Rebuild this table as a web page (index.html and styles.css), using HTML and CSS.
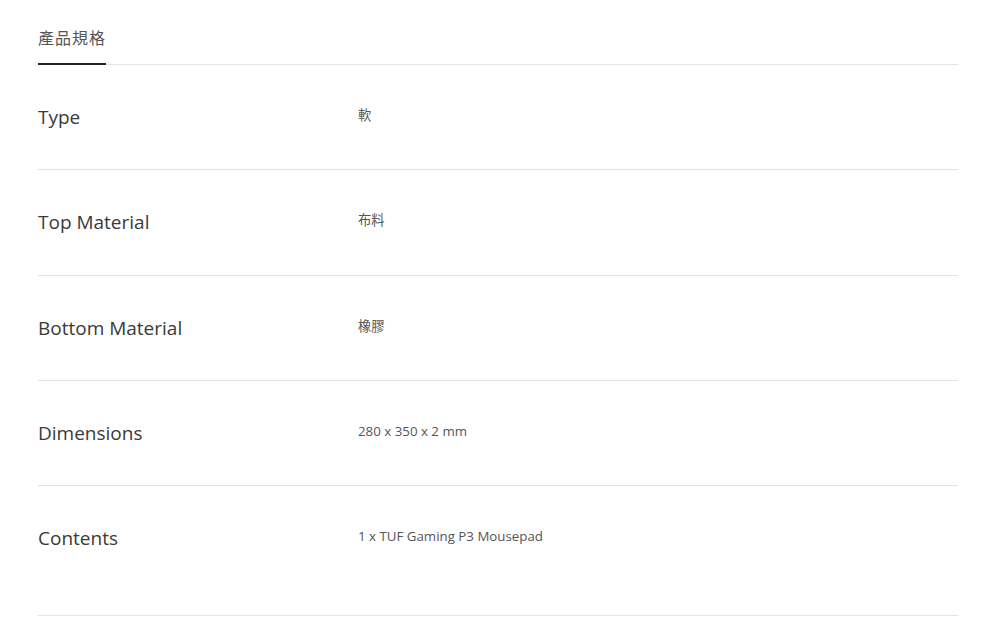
FILE: index.html
```html
<!DOCTYPE html>
<html lang="zh-Hant">
<head>
<meta charset="utf-8">
<link rel="stylesheet" href="styles.css">
</head>
<body>
<div class="spec">
  <div class="tabs">
    <div class="tab active">產品規格</div>
  </div>
  <div class="rows">
    <div class="row">
      <div class="label">Type</div>
      <div class="value">軟</div>
    </div>
    <div class="row">
      <div class="label">Top Material</div>
      <div class="value">布料</div>
    </div>
    <div class="row">
      <div class="label">Bottom Material</div>
      <div class="value">橡膠</div>
    </div>
    <div class="row">
      <div class="label">Dimensions</div>
      <div class="value">280 x 350 x 2 mm</div>
    </div>
    <div class="row last">
      <div class="label">Contents</div>
      <div class="value">1 x TUF Gaming P3 Mousepad</div>
    </div>
  </div>
</div>
</body>
</html>
```

FILE: styles.css
```css
html, body {
  margin: 0;
  padding: 0;
  background: #fff;
}
body {
  font-family: "Open Sans", "Noto Sans CJK TC", sans-serif;
  color: #333;
}
.spec {
  width: 920px;
  margin-left: 38px;
}
.tabs {
  display: flex;
  padding-top: 25px;
  border-bottom: 1px solid #e2e2e2;
}
.tab {
  font-family: "Noto Sans CJK TC", sans-serif;
  font-size: 16px;
  line-height: 24px;
  color: #555;
  padding: 0 0 14px 0;
  letter-spacing: 1px;
  border-bottom: 2px solid transparent;
  margin-bottom: -1px;
}
.tab.active {
  border-bottom-color: #222;
}
.row {
  display: flex;
  padding: 38px 0 38.33px;
  border-bottom: 1px solid #e2e2e2;
}
.row.last {
  padding-bottom: 63px;
}
.label {
  width: 320px;
  flex: none;
  font-size: 19px;
  line-height: 28px;
  color: #3a3a3a;
}
.value {
  font-family: "Open Sans", "Noto Sans CJK TC", sans-serif;
  font-size: 13.3px;
  line-height: 24px;
  color: #555;
}
```
